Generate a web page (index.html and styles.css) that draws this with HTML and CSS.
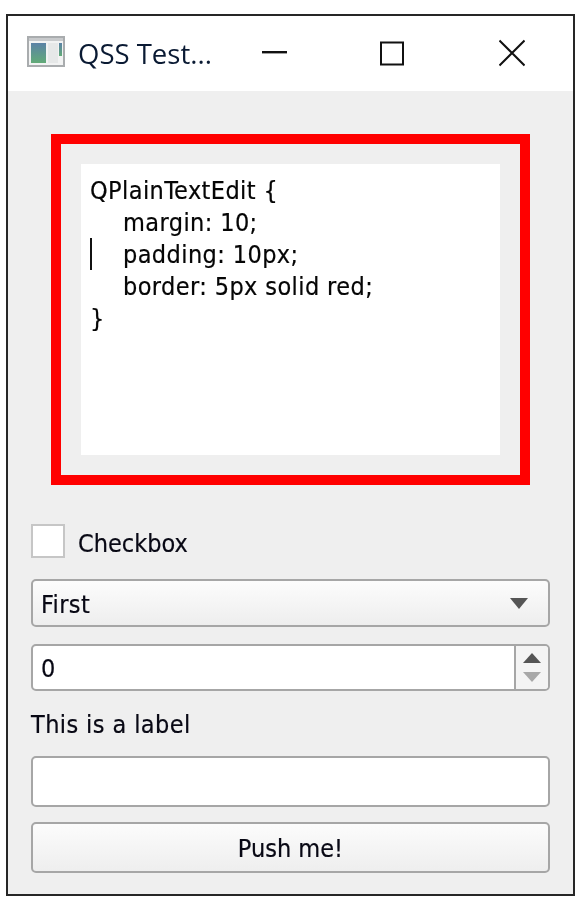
FILE: index.html
```html
<!DOCTYPE html>
<html lang="en">
<head>
<meta charset="utf-8">
<title>QSS Test</title>
<link rel="stylesheet" href="styles.css">
</head>
<body>
<div class="window">
  <header class="titlebar">
    <svg class="app-icon" width="38" height="31" viewBox="0 0 38 31">
      <defs>
        <linearGradient id="pane" x1="0" y1="0" x2="0" y2="1">
          <stop offset="0" stop-color="#5b82a6"/>
          <stop offset="1" stop-color="#62ab78"/>
        </linearGradient>
      </defs>
      <rect x="1" y="1" width="36" height="29" fill="#f2f3f3" stroke="#a9acae" stroke-width="2"/>
      <rect x="2" y="2" width="34" height="3" fill="#c8cacc"/>
      <rect x="4" y="7" width="15" height="20" fill="url(#pane)"/>
      <rect x="21" y="7" width="10" height="20" fill="#e6e8e8"/>
      <rect x="32" y="7" width="3" height="13" fill="url(#pane)"/>
    </svg>
    <span class="title">QSS Test...</span>
    <div class="controls">
      <svg class="ctl" width="26" height="26" viewBox="0 0 26 26"><path d="M1 12.2H26" stroke="#111" stroke-width="2.4" fill="none"/></svg>
      <svg class="ctl" width="26" height="26" viewBox="0 0 26 26"><rect x="1" y="2.5" width="22" height="22" stroke="#111" stroke-width="2" fill="none"/></svg>
      <svg class="ctl" width="26" height="28" viewBox="0 0 26 28"><path d="M0.5 1.5L25.5 26.5M25.5 1.5L0.5 26.5" stroke="#111" stroke-width="2" fill="none"/></svg>
    </div>
  </header>
  <main class="client">
    <div class="editor-outer">
      <div class="editor-inner">
        <div class="code">
          <span class="caret"></span>
          <div class="line">QPlainTextEdit {</div>
          <div class="line indent">margin: 10;</div>
          <div class="line indent">padding: 10px;</div>
          <div class="line indent">border: 5px solid red;</div>
          <div class="line">}</div>
        </div>
      </div>
    </div>
    <label class="check-row"><span class="checkbox"></span><span class="text">Checkbox</span></label>
    <div class="combo">
      <span class="text wide">First</span>
      <svg width="18" height="11" viewBox="0 0 18 11"><path d="M0 0H18L9 11Z" fill="#555"/></svg>
    </div>
    <div class="spin">
      <span class="spin-value text">0</span>
      <div class="spin-buttons">
        <svg width="18" height="10" viewBox="0 0 18 10"><path d="M0 10H18L9 0Z" fill="#555"/></svg>
        <svg width="18" height="10" viewBox="0 0 18 10"><path d="M0 0H18L9 10Z" fill="#a8a8a8"/></svg>
      </div>
    </div>
    <div class="label text wide">This is a label</div>
    <div class="lineedit"></div>
    <button class="push text" type="button">Push me!</button>
  </main>
</div>
</body>
</html>
```
FILE: styles.css
```css
* { box-sizing: border-box; }
html, body { margin: 0; padding: 0; background: #fff; }
body { padding: 14px 0 0 6px; font-family: "DejaVu Sans", sans-serif; color: #111; }
.window { width: 569px; height: 882px; border: 2px solid #262626; display: flex; flex-direction: column; background: #efefef; filter: blur(0.4px); }
.titlebar { height: 75px; background: #fff; display: flex; align-items: center; padding-left: 19px; flex: none; }
.app-icon { flex: none; margin-bottom: 5px; }
.title { font-family: "Open Sans", sans-serif; font-size: 27.5px; margin-left: 13px; color: #0a1a33; white-space: nowrap; }
.controls { margin-left: auto; display: flex; align-items: center; gap: 93px; padding-right: 48px; margin-bottom: 2px; }
.ctl { display: block; }
.client { flex: 1; padding: 23px 23px 0; display: flex; flex-direction: column; }
.editor-outer { margin: 20px; height: 351px; border: 10px solid #f00; padding: 20px; background: #efefef; }
.editor-inner { height: 100%; background: #fff; padding: 11px 9px; }
.code { position: relative; font-family: "DejaVu Sans", sans-serif; font-stretch: condensed; font-size: 25px; letter-spacing: 0.4px; line-height: 32px; color: #050505; -webkit-text-stroke: 0.2px #050505; }
.line { white-space: pre; height: 32px; }
.indent { padding-left: 33px; }
.caret { position: absolute; left: 0; top: 63px; width: 1.5px; height: 32px; background: #111; }
.text { font-family: "DejaVu Sans", sans-serif; font-stretch: condensed; font-size: 25px; color: #080814; -webkit-text-stroke: 0.2px #080814; }
.wide { letter-spacing: 0.4px; }
.check-row { display: flex; gap: 13px; height: 40px; margin-top: 17px; padding-top: 2px; align-items: flex-start; }
.check-row .text { line-height: 40px; }
.checkbox { width: 34px; height: 34px; background: #fff; border: 2px solid #c6c6c6; flex: none; }
.combo { margin-top: 17px; height: 48px; border: 2px solid #a6a6a6; border-radius: 5px; background: linear-gradient(#fcfcfc, #eeeeee); display: flex; align-items: center; justify-content: space-between; padding: 2px 20px 0 8px; }
.combo svg { margin-bottom: 2px; }
.spin { margin-top: 17px; height: 47px; border: 2px solid #a6a6a6; border-radius: 5px; background: #fff; display: flex; }
.spin-value { flex: 1; display: flex; align-items: center; padding: 2px 0 0 8px; }
.spin-buttons { width: 34px; border-left: 2px solid #a6a6a6; background: #f4f4f4; border-radius: 0 4px 4px 0; display: flex; flex-direction: column; align-items: center; justify-content: center; gap: 9px; }
.spin-buttons svg { display: block; }
.label { margin-top: 17px; height: 31px; line-height: 34px; }
.lineedit { margin-top: 17px; height: 51px; border: 2px solid #a6a6a6; border-radius: 5px; background: #fff; }
.push { margin-top: 15px; height: 51px; border: 2px solid #a6a6a6; border-radius: 5px; background: linear-gradient(#fcfcfc, #eeeeee); padding: 2px 0 0; }
```
